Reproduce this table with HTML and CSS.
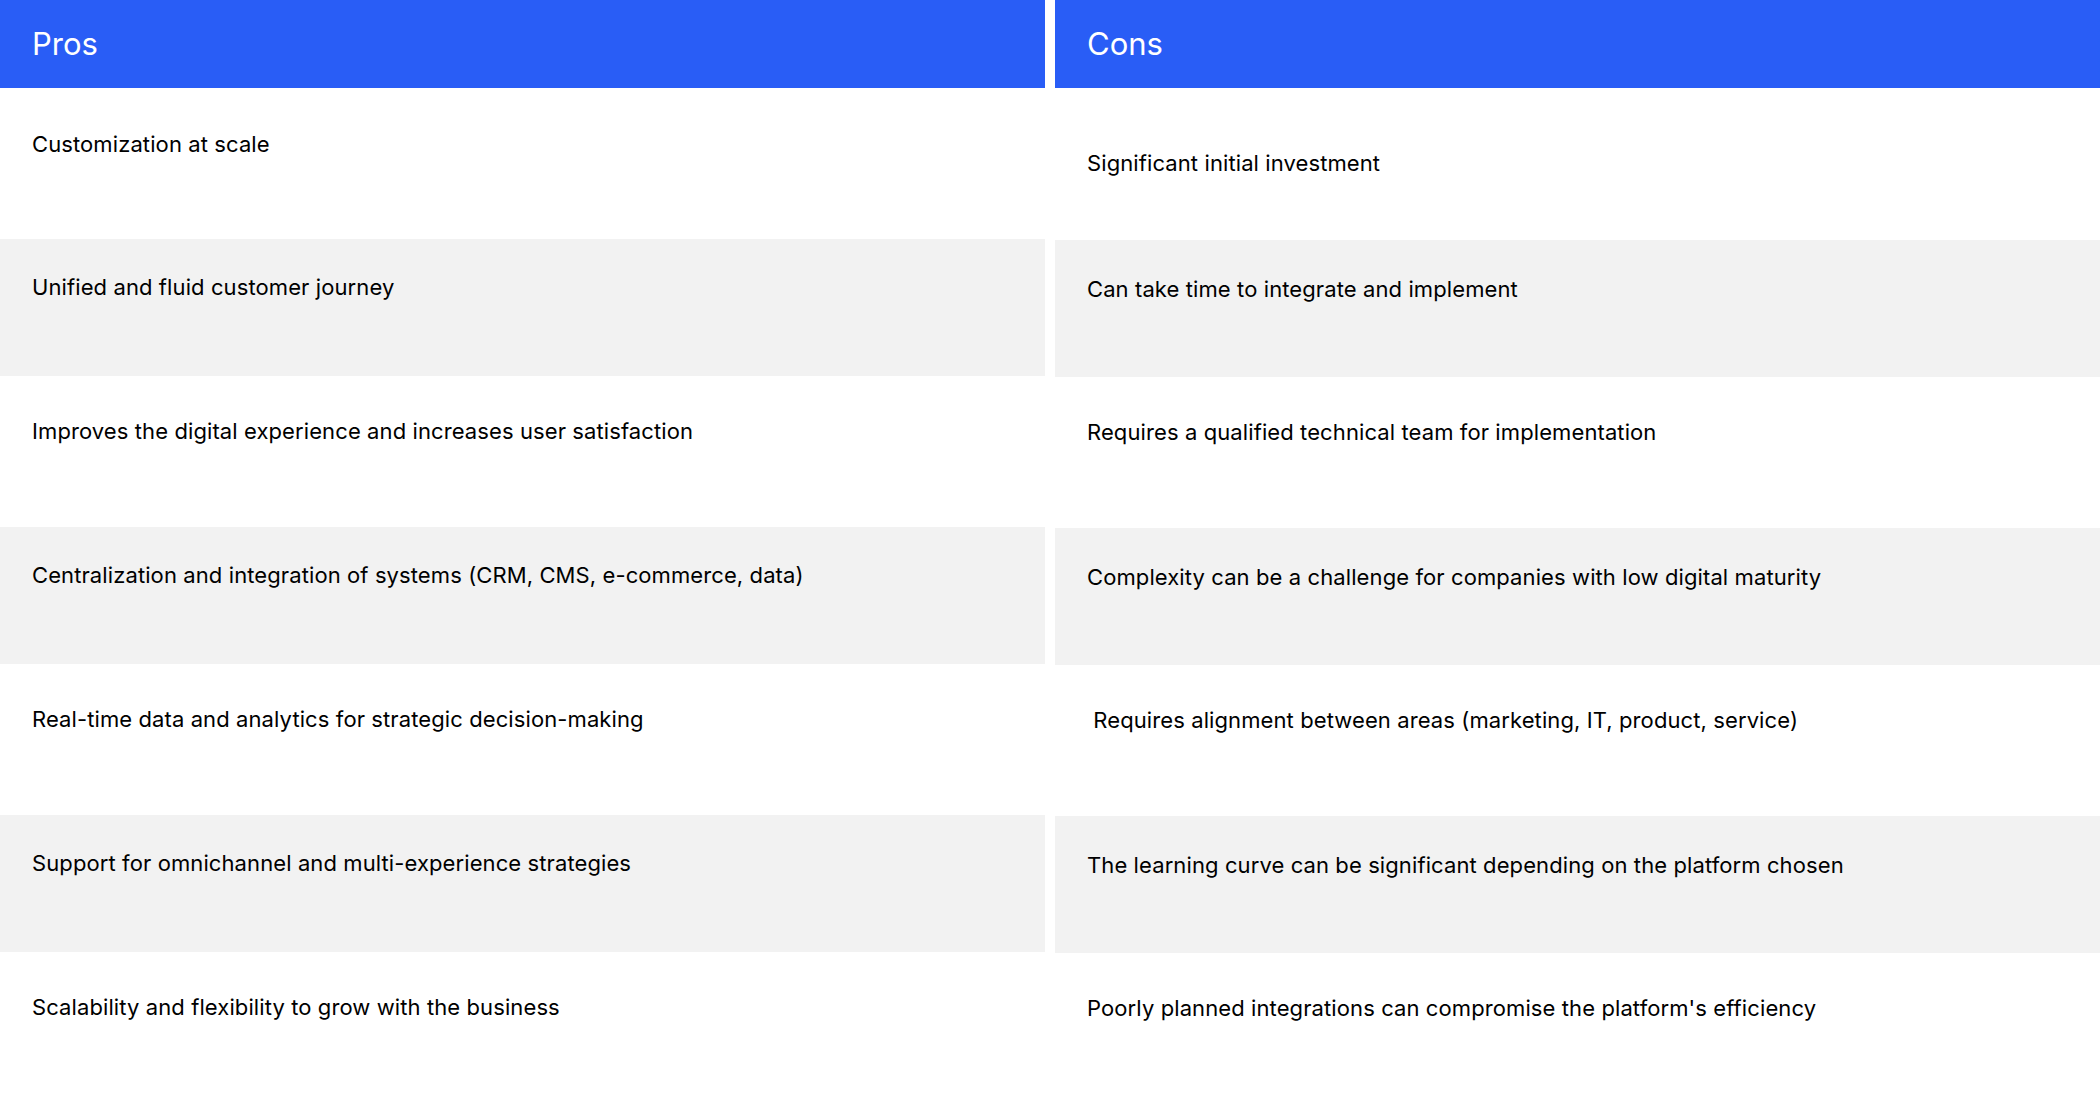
FILE: index.html
```html
<!DOCTYPE html>
<html lang="en">
<head>
<meta charset="utf-8">
<title>Pros and Cons</title>
<link rel="stylesheet" href="styles.css">
</head>
<body>
<main class="compare">
  <section class="col col-pros">
    <div class="head">Pros</div>
    <div class="cell first">Customization at scale</div>
    <div class="cell alt">Unified and fluid customer journey</div>
    <div class="cell">Improves the digital experience and increases user satisfaction</div>
    <div class="cell alt">Centralization and integration of systems (CRM, CMS, e-commerce, data)</div>
    <div class="cell">Real-time data and analytics for strategic decision-making</div>
    <div class="cell alt">Support for omnichannel and multi-experience strategies</div>
    <div class="cell last">Scalability and flexibility to grow with the business</div>
  </section>
  <section class="col col-cons">
    <div class="head">Cons</div>
    <div class="cell first">Significant initial investment</div>
    <div class="cell alt">Can take time to integrate and implement</div>
    <div class="cell">Requires a qualified technical team for implementation</div>
    <div class="cell alt">Complexity can be a challenge for companies with low digital maturity</div>
    <div class="cell">&nbsp;Requires alignment between areas (marketing, IT, product, service)</div>
    <div class="cell alt">The learning curve can be significant depending on the platform chosen</div>
    <div class="cell last">Poorly planned integrations can compromise the platform's efficiency</div>
  </section>
</main>
</body>
</html>
```
FILE: styles.css
```css
html, body {
  margin: 0;
  padding: 0;
  background: #ffffff;
}

body {
  font-family: Inter, "Liberation Sans", Arial, sans-serif;
  color: #000000;
  width: 2100px;
  height: 1096px;
  overflow: hidden;
}

.compare {
  display: grid;
  grid-template-columns: 1fr 1fr;
  column-gap: 10px;
  width: 2100px;
}

.col {
  display: flex;
  flex-direction: column;
}

.head {
  height: 88px;
  flex: none;
  box-sizing: border-box;
  display: flex;
  align-items: center;
  padding: 0 32px 1px;
  background: #295df6;
  color: #ffffff;
  font-size: 31px;
  font-weight: 400;
}

.cell {
  flex: none;
  height: 151px;
  box-sizing: border-box;
  padding: 40px 32px 0;
  font-size: 22px;
  line-height: 30px;
  letter-spacing: 0.1px;
  background: #ffffff;
}

.cell.alt {
  height: 137px;
  padding-top: 33px;
  background: #f2f2f2;
}

.col-pros .cell.first {
  padding-top: 41px;
}

.col-cons .cell.first {
  height: 152px;
  padding-top: 60px;
}

.col-cons .cell.alt {
  padding-top: 34px;
}
```
